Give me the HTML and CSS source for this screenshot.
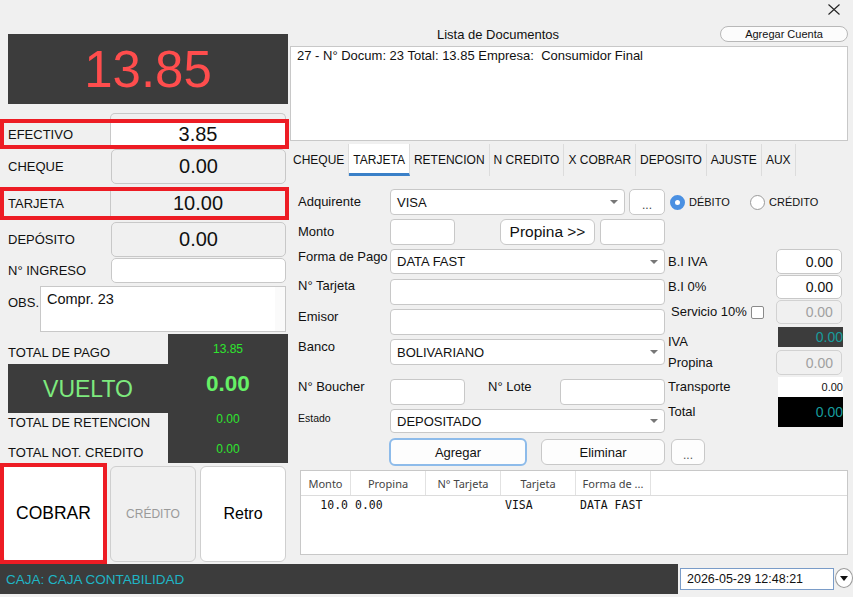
FILE: index.html
```html
<!DOCTYPE html>
<html lang="es">
<head>
<meta charset="utf-8">
<title>Cobro</title>
<link rel="stylesheet" href="styles.css">
</head>
<body>
<div class="app">
  <div class="main">
    <section class="left">
      <div class="display">13.85</div>
      <div class="stub"></div>
      <div class="pay hl h-efectivo">
        <span class="pay-label">EFECTIVO</span>
        <span class="pay-value v-white">3.85</span>
      </div>
      <div class="pay h-cheque">
        <span class="pay-label">CHEQUE</span>
        <span class="pay-value boxed">0.00</span>
      </div>
      <div class="pay hl h-tarjeta">
        <span class="pay-label">TARJETA</span>
        <span class="pay-value">10.00</span>
      </div>
      <div class="pay h-deposito">
        <span class="pay-label">DEPÓSITO</span>
        <span class="pay-value boxed">0.00</span>
      </div>
      <div class="pay h-ingreso">
        <span class="pay-label">N° INGRESO</span>
        <span class="pay-value boxed v-white"></span>
      </div>
      <div class="obs">
        <span class="obs-label">OBS.</span>
        <div class="obs-box"><span class="obs-text">Compr. 23</span><span class="obs-scroll"></span></div>
      </div>
      <div class="totals">
        <span class="t-label t-pago">TOTAL DE PAGO</span>
        <span class="t-val t-val-pago">13.85</span>
        <span class="vuelto">VUELTO</span>
        <span class="t-val t-big">0.00</span>
        <span class="t-label t-ret">TOTAL DE RETENCION</span>
        <span class="t-val t-val-ret">0.00</span>
        <span class="t-label t-nc">TOTAL NOT. CREDITO</span>
        <span class="t-val t-val-nc">0.00</span>
      </div>
      <div class="actions">
        <div class="cobrar-wrap"><button class="act-btn cobrar">COBRAR</button></div>
        <button class="act-btn credito">CRÉDITO</button>
        <button class="act-btn retro">Retro</button>
      </div>
    </section>

    <section class="right">
      <div class="close-row">
        <svg class="close-x" width="12" height="11" viewBox="0 0 12 11"><path d="M0.5 0.5 L11.5 10.5 M11.5 0.5 L0.5 10.5" stroke="#222" stroke-width="1.1" fill="none"/></svg>
      </div>
      <div class="head-row">
        <span class="head-title">Lista de Documentos</span>
        <button class="btn-cuenta">Agregar Cuenta</button>
      </div>
      <div class="doc-list">27 - N° Docum: 23 Total: 13.85 Empresa:&nbsp; Consumidor Final</div>
      <div class="tabs">
        <span class="tab">CHEQUE</span>
        <span class="tab active">TARJETA</span>
        <span class="tab">RETENCION</span>
        <span class="tab">N CREDITO</span>
        <span class="tab">X COBRAR</span>
        <span class="tab">DEPOSITO</span>
        <span class="tab">AJUSTE</span>
        <span class="tab">AUX</span>
      </div>

      <div class="form">
        <div class="form-left">
          <div class="frow r-adq center">
            <span class="flabel">Adquirente</span>
            <div class="select w-adq"><span class="sel-text">VISA</span><span class="arrow"></span></div>
            <button class="dots dots-adq">...</button>
          </div>
          <div class="frow r-monto center">
            <span class="flabel">Monto</span>
            <div class="input w-small"></div>
            <button class="btn-propina">Propina &gt;&gt;</button>
            <div class="input w-small2"></div>
          </div>
          <div class="frow r-forma">
            <span class="flabel">Forma de Pago</span>
            <div class="select w-full"><span class="sel-text">DATA FAST</span><span class="arrow"></span></div>
          </div>
          <div class="frow r-tarj">
            <span class="flabel">N° Tarjeta</span>
            <div class="input w-full"></div>
          </div>
          <div class="frow r-emisor">
            <span class="flabel">Emisor</span>
            <div class="input w-full"></div>
          </div>
          <div class="frow r-banco">
            <span class="flabel">Banco</span>
            <div class="select w-full"><span class="sel-text">BOLIVARIANO</span><span class="arrow"></span></div>
          </div>
          <div class="frow r-boucher">
            <span class="flabel">N° Boucher</span>
            <div class="input w-boucher"></div>
            <span class="flabel lote">N° Lote</span>
            <div class="input w-lote"></div>
          </div>
          <div class="frow r-estado">
            <span class="flabel small">Estado</span>
            <div class="select w-full"><span class="sel-text">DEPOSITADO</span><span class="arrow"></span></div>
          </div>
        </div>

        <div class="form-right">
          <div class="radios">
            <span class="radio-item r1"><span class="radio on"></span><span class="radio-label">DÉBITO</span></span>
            <span class="radio-item"><span class="radio"></span><span class="radio-label">CRÉDITO</span></span>
          </div>
          <div class="rrow rr-biiva">
            <span class="rlabel">B.I IVA</span>
            <div class="num">0.00</div>
          </div>
          <div class="rrow rr-bi0">
            <span class="rlabel">B.I 0%</span>
            <div class="num">0.00</div>
          </div>
          <div class="rrow rr-serv">
            <span class="rlabel serv">Servicio 10%</span>
            <span class="check"></span>
            <div class="num disabled">0.00</div>
          </div>
          <div class="rrow rr-iva">
            <span class="rlabel iva">IVA</span>
            <div class="box dark">0.00</div>
          </div>
          <div class="rrow rr-prop">
            <span class="rlabel">Propina</span>
            <div class="num disabled">0.00</div>
          </div>
          <div class="rrow rr-trans">
            <span class="rlabel">Transporte</span>
            <div class="box light">0.00</div>
          </div>
          <div class="rrow rr-total">
            <span class="rlabel">Total</span>
            <div class="box black">0.00</div>
          </div>
        </div>
      </div>

      <div class="btn-row">
        <button class="btn agregar">Agregar</button>
        <button class="btn eliminar">Eliminar</button>
        <button class="btn more">...</button>
      </div>

      <div class="table">
        <div class="thead">
          <span class="th c1">Monto</span>
          <span class="th c2">Propina</span>
          <span class="th c3">N° Tarjeta</span>
          <span class="th c4">Tarjeta</span>
          <span class="th c5">Forma de ...</span>
        </div>
        <div class="trow">
          <span class="td c1 num-cell">10.0</span>
          <span class="td c2">0.00</span>
          <span class="td c3"></span>
          <span class="td c4">VISA</span>
          <span class="td c5">DATA FAST</span>
        </div>
      </div>
    </section>
  </div>

  <div class="bar">
    <div class="bar-dark">CAJA: CAJA CONTABILIDAD</div>
    <div class="bar-right">
      <div class="dt">2026-05-29 12:48:21</div>
      <span class="dt-btn"><svg width="8" height="5" viewBox="0 0 8 5"><path d="M0 0 L8 0 L4 5 Z" fill="#111"/></svg></span>
    </div>
  </div>
</div>
</body>
</html>
```

FILE: styles.css
```css
* { box-sizing: border-box; }
html, body { margin: 0; padding: 0; }
body {
  width: 853px;
  height: 597px;
  overflow: hidden;
  background: #f0f0f0;
  font-family: "Liberation Sans", Arial, sans-serif;
  font-size: 13px;
  color: #111;
}
button { font-family: inherit; color: inherit; margin: 0; padding: 0; cursor: default; }

.app { display: flex; flex-direction: column; height: 597px; }
.main { display: flex; height: 564px; flex: none; }

/* ---------- left column ---------- */
.left { width: 290px; flex: none; padding-top: 34px; display: flex; flex-direction: column; }

.display {
  margin-left: 8px; width: 280px; height: 70px; flex: none;
  background: #3c3c3c; color: #ff4d4d;
  font-size: 51px;
  display: flex; align-items: center; justify-content: center;
}
.stub {
  margin: 9px 0 0 110px; width: 176px; height: 6px; flex: none;
  border: 1px solid #c8c8c8; border-bottom: none; border-radius: 5px 5px 0 0;
}
.pay { display: flex; align-items: stretch; flex: none; }
.pay-label { width: 111px; flex: none; padding-left: 8px; display: flex; align-items: center; font-size: 13px; }
.pay-value {
  width: 175px; flex: none;
  display: flex; align-items: center; justify-content: center;
  font-size: 20px; color: #111;
}
.boxed { border: 1px solid #c8c8c8; border-radius: 5px; }
.v-white { background: #fff; }
.hl { width: 289px; border: 4px solid #ed1c24; }
.hl .pay-label { width: 106px; padding-left: 4px; }
.hl .pay-value { width: auto; flex: 1; border-left: 1px solid #c8c8c8; }

.h-efectivo { height: 30px; }
.h-cheque { height: 35px; }
.h-tarjeta { height: 33px; margin-top: 3px; }
.h-deposito { height: 35px; margin-top: 2px; }
.h-ingreso { height: 25px; margin-top: 1px; }

.obs { display: flex; height: 46px; margin-top: 3px; flex: none; }
.obs-label { width: 40px; flex: none; padding: 9px 0 0 8px; line-height: 16px; font-size: 13px; }
.obs-box {
  width: 246px; flex: none; background: #fff; border: 1px solid #c8c8c8;
  display: flex;
}
.obs-text { flex: 1; padding: 4px 0 0 6px; font-size: 14.5px; line-height: 17px; }
.obs-scroll { width: 10px; background: #fafafa; }

.totals {
  margin-top: 2px; flex: none;
  display: grid;
  grid-template-columns: 168px 120px;
  grid-template-rows: 30px 49px 30px 20px;
}
.totals .t-val { grid-column: 2; background: #3c3c3c; color: #2ee62e; font-size: 12px; line-height: 12px; text-align: center; }
.t-label { grid-column: 1; padding-left: 8px; font-size: 13px; line-height: 16px; white-space: nowrap; }
.t-pago { grid-row: 1; padding-top: 11px; }
.t-val-pago { grid-row: 1; padding-top: 9px; }
.vuelto {
  grid-row: 2; grid-column: 1; margin-left: 8px; background: #3c3c3c;
  color: #7eea7e; font-size: 23px;
  display: flex; align-items: center; justify-content: center; padding-top: 2px;
}
.totals .t-big { grid-row: 2; font-size: 22.5px; font-weight: bold; color: #66f066; padding-bottom: 8px; line-height: 40px; }
.t-ret { grid-row: 3; padding-top: 2px; }
.t-val-ret { grid-row: 3; padding-top: 0; }
.t-nc { grid-row: 4; padding-top: 2px; }
.t-val-nc { grid-row: 4; padding-top: 0; }

.actions { display: flex; align-items: center; height: 101px; flex: none; }
.cobrar-wrap { width: 107px; height: 101px; border: 4px solid #ed1c24; display: flex; }
.act-btn {
  border: 1px solid #cfcfcf; border-radius: 6px; background: #fff;
  display: flex; align-items: center; justify-content: center;
}
.cobrar { flex: 1; border: none; border-radius: 0 0 4px 4px; font-size: 17.5px; color: #000; }
.credito { width: 86px; height: 96px; margin-left: 3px; background: #f0f0f0; color: #9a9a9a; font-size: 12px; }
.retro { width: 86px; height: 96px; margin-left: 4px; font-size: 16px; color: #000; }

/* ---------- right column ---------- */
.right { flex: 1; display: flex; flex-direction: column; min-width: 0; }
.close-row { height: 26px; display: flex; justify-content: flex-end; align-items: flex-start; flex: none; }
.close-x { margin: 4px 13px 0 0; }
.head-row { height: 16px; display: flex; align-items: center; flex: none; }
.head-title { flex: 1; text-align: center; padding-right: 14px; font-size: 13px; }
.btn-cuenta {
  width: 128px; height: 16px; margin-right: 5px;
  border: 1px solid #b8b8b8; border-radius: 8px; background: #fcfcfc;
  font-size: 11px; line-height: 14px;
}
.doc-list {
  margin: 4px 5px 0 0; height: 95px; flex: none;
  background: #fff; border: 1px solid #c8c8c8;
  padding: 1px 6px; font-size: 13px; line-height: 16px; white-space: nowrap;
}
.tabs { margin: 3px 0 0 -1px; height: 32px; display: flex; flex: none; }
.tab {
  padding: 0 4px; border-right: 1px solid #dcdcdc;
  display: flex; align-items: center; font-size: 12px;
}
.tab.active { background: #fff; border-bottom: 3px solid #3a80c8; padding-top: 3px; }

.form { display: flex; align-items: flex-start; flex: none; }
.form-left { width: 378px; flex: none; padding-left: 8px; display: flex; flex-direction: column; }
.frow { display: flex; align-items: flex-start; }
.frow.center { align-items: center; }
.flabel { width: 92px; flex: none; font-size: 13px; line-height: 16px; white-space: nowrap; }
.flabel.small { font-size: 10.5px; padding-top: 0; }
.flabel.lote { width: 72px; margin-left: 23px; }

.input, .select {
  background: #fff; border: 1px solid #c8c8c8; border-radius: 4px; flex: none;
}
.select { display: flex; align-items: center; padding: 0 6px; font-size: 13px; }
.sel-text { flex: 1; }
.arrow { width: 0; height: 0; border-left: 4px solid transparent; border-right: 4px solid transparent; border-top: 4px solid #777; }

.r-adq { margin-top: 13px; height: 26px; }
.w-adq { width: 235px; height: 26px; }
.dots { width: 36px; height: 26px; margin-left: 4px; border: 1px solid #c8c8c8; border-radius: 5px; background: #fff; font-size: 12px; color: #444; padding-top: 6px; }
.r-monto { margin-top: 4px; height: 26px; }
.w-small { width: 65px; height: 26px; }
.btn-propina { width: 95px; height: 26px; margin-left: 45px; border: 1px solid #c8c8c8; border-radius: 6px; background: #fff; font-size: 15.5px; }
.w-small2 { width: 65px; height: 26px; margin-left: 5px; }
.w-full { width: 275px; }
.r-forma { margin-top: 4px; }
.r-forma .select { height: 25px; }
.r-tarj { margin-top: 5px; }
.r-tarj .input { height: 26px; }
.r-emisor { margin-top: 4px; }
.r-emisor .input { height: 26px; }
.r-banco { margin-top: 4px; }
.r-banco .select { height: 26px; }
.r-tarj .flabel { margin-top: -1px; }
.r-boucher { margin-top: 14px; }
.w-boucher { width: 75px; height: 26px; }
.w-lote { width: 105px; height: 26px; }
.r-estado { margin-top: 4px; }
.r-estado .select { height: 24px; }
.r-estado .flabel { padding-top: 1px; }

.form-right { width: 180px; flex: none; display: flex; flex-direction: column; }
.radios { margin-top: 13px; height: 26px; display: flex; align-items: center; padding-left: 2px; }
.radio-item { display: flex; align-items: center; }
.radio-item.r1 { width: 80px; }
.radio { width: 15px; height: 15px; border-radius: 50%; border: 1px solid #9a9a9a; background: #fff; display: inline-block; flex: none; }
.radio.on { border: 5px solid #4a90e2; background: #fff; }
.radio-label { margin-left: 4px; font-size: 11px; }

.rrow { display: flex; align-items: center; }
.rlabel { width: 108px; flex: none; font-size: 13px; line-height: 16px; white-space: nowrap; }
.num {
  width: 66px; height: 100%; background: #fff; border: 1px solid #c8c8c8; border-radius: 5px;
  padding-right: 8px; font-size: 14px; display: flex; align-items: center; justify-content: flex-end;
}
.num.disabled { background: #f0f0f0; color: #a0a0a0; border-color: #d2d2d2; }
.rr-biiva { margin-top: 34px; height: 25px; }
.rr-bi0 { margin-top: 1px; height: 24px; }
.rr-serv { margin-top: 1px; height: 24px; }
.rlabel.serv { width: auto; padding-left: 3px; }
.check { width: 13px; height: 13px; margin: 0 12px 0 4px; border: 1px solid #8a8a8a; border-radius: 2px; background: #fff; flex: none; }
.rr-iva { margin-top: 3px; height: 20px; align-items: flex-start; }
.rlabel.iva { padding-top: 7px; }
.box { width: 65px; height: 100%; margin-left: 2px; display: flex; align-items: center; justify-content: flex-end; font-size: 14px; }
.box.dark { background: #3c3c3c; color: #179c9c; }
.box.light { background: #fff; color: #111; font-size: 11px; }
.box.black { background: #000; color: #179c9c; }
.rr-prop { margin-top: 3px; height: 25px; }
.rr-trans { margin-top: 2px; height: 20px; }
.rr-total { height: 30px; }

.btn-row { display: flex; align-items: center; height: 28px; margin-top: 5px; flex: none; }
.btn { border: 1px solid #c8c8c8; border-radius: 6px; background: #fdfdfd; font-size: 13px; height: 26px; }
.agregar { margin-left: 99px; width: 138px; height: 28px; border: 2px solid #8dbbea; }
.eliminar { margin-left: 14px; width: 124px; }
.more { margin-left: 6px; width: 34px; color: #555; font-size: 12px; padding-top: 6px; }

.table {
  margin: 4px 5px 0 10px; height: 85px; flex: none;
  background: #fff; border: 1px solid #c8c8c8;
}
.thead { display: flex; height: 25px; border-bottom: 1px solid #dcdcdc; }
.th {
  display: flex; align-items: center; justify-content: center;
  border-right: 1px solid #e2e2e2;
  font-family: "Noto Sans", sans-serif; font-size: 11px; color: #444;
}
.c1 { width: 50px; }
.c2, .c3, .c4, .c5 { width: 75px; }
.trow { display: flex; padding-top: 1px; }
.td { font-family: "DejaVu Sans Mono", monospace; font-size: 11.5px; line-height: 16px; padding-left: 4px; white-space: pre; color: #111; }
.td.num-cell { text-align: right; padding: 0 3px 0 0; }

/* ---------- bottom bar ---------- */
.bar { display: flex; height: 30px; flex: none; }
.bar-dark {
  width: 680px; background: #3c3c3c; color: #1fb5c5;
  font-size: 13.5px; padding-left: 6px; display: flex; align-items: center;
}
.bar-right { flex: 1; display: flex; align-items: flex-start; padding: 4px 0 0 2px; }
.dt {
  width: 154px; height: 22px; background: #fff; border: 1px solid #7a9cc8;
  font-size: 12.5px; line-height: 20px; padding-left: 6px;
}
.dt-btn {
  width: 18px; height: 20px; margin-left: 1px; border: 1px solid #9a9a9a; border-radius: 50%;
  background: #fff; display: flex; align-items: center; justify-content: center; flex: none;
}
```
